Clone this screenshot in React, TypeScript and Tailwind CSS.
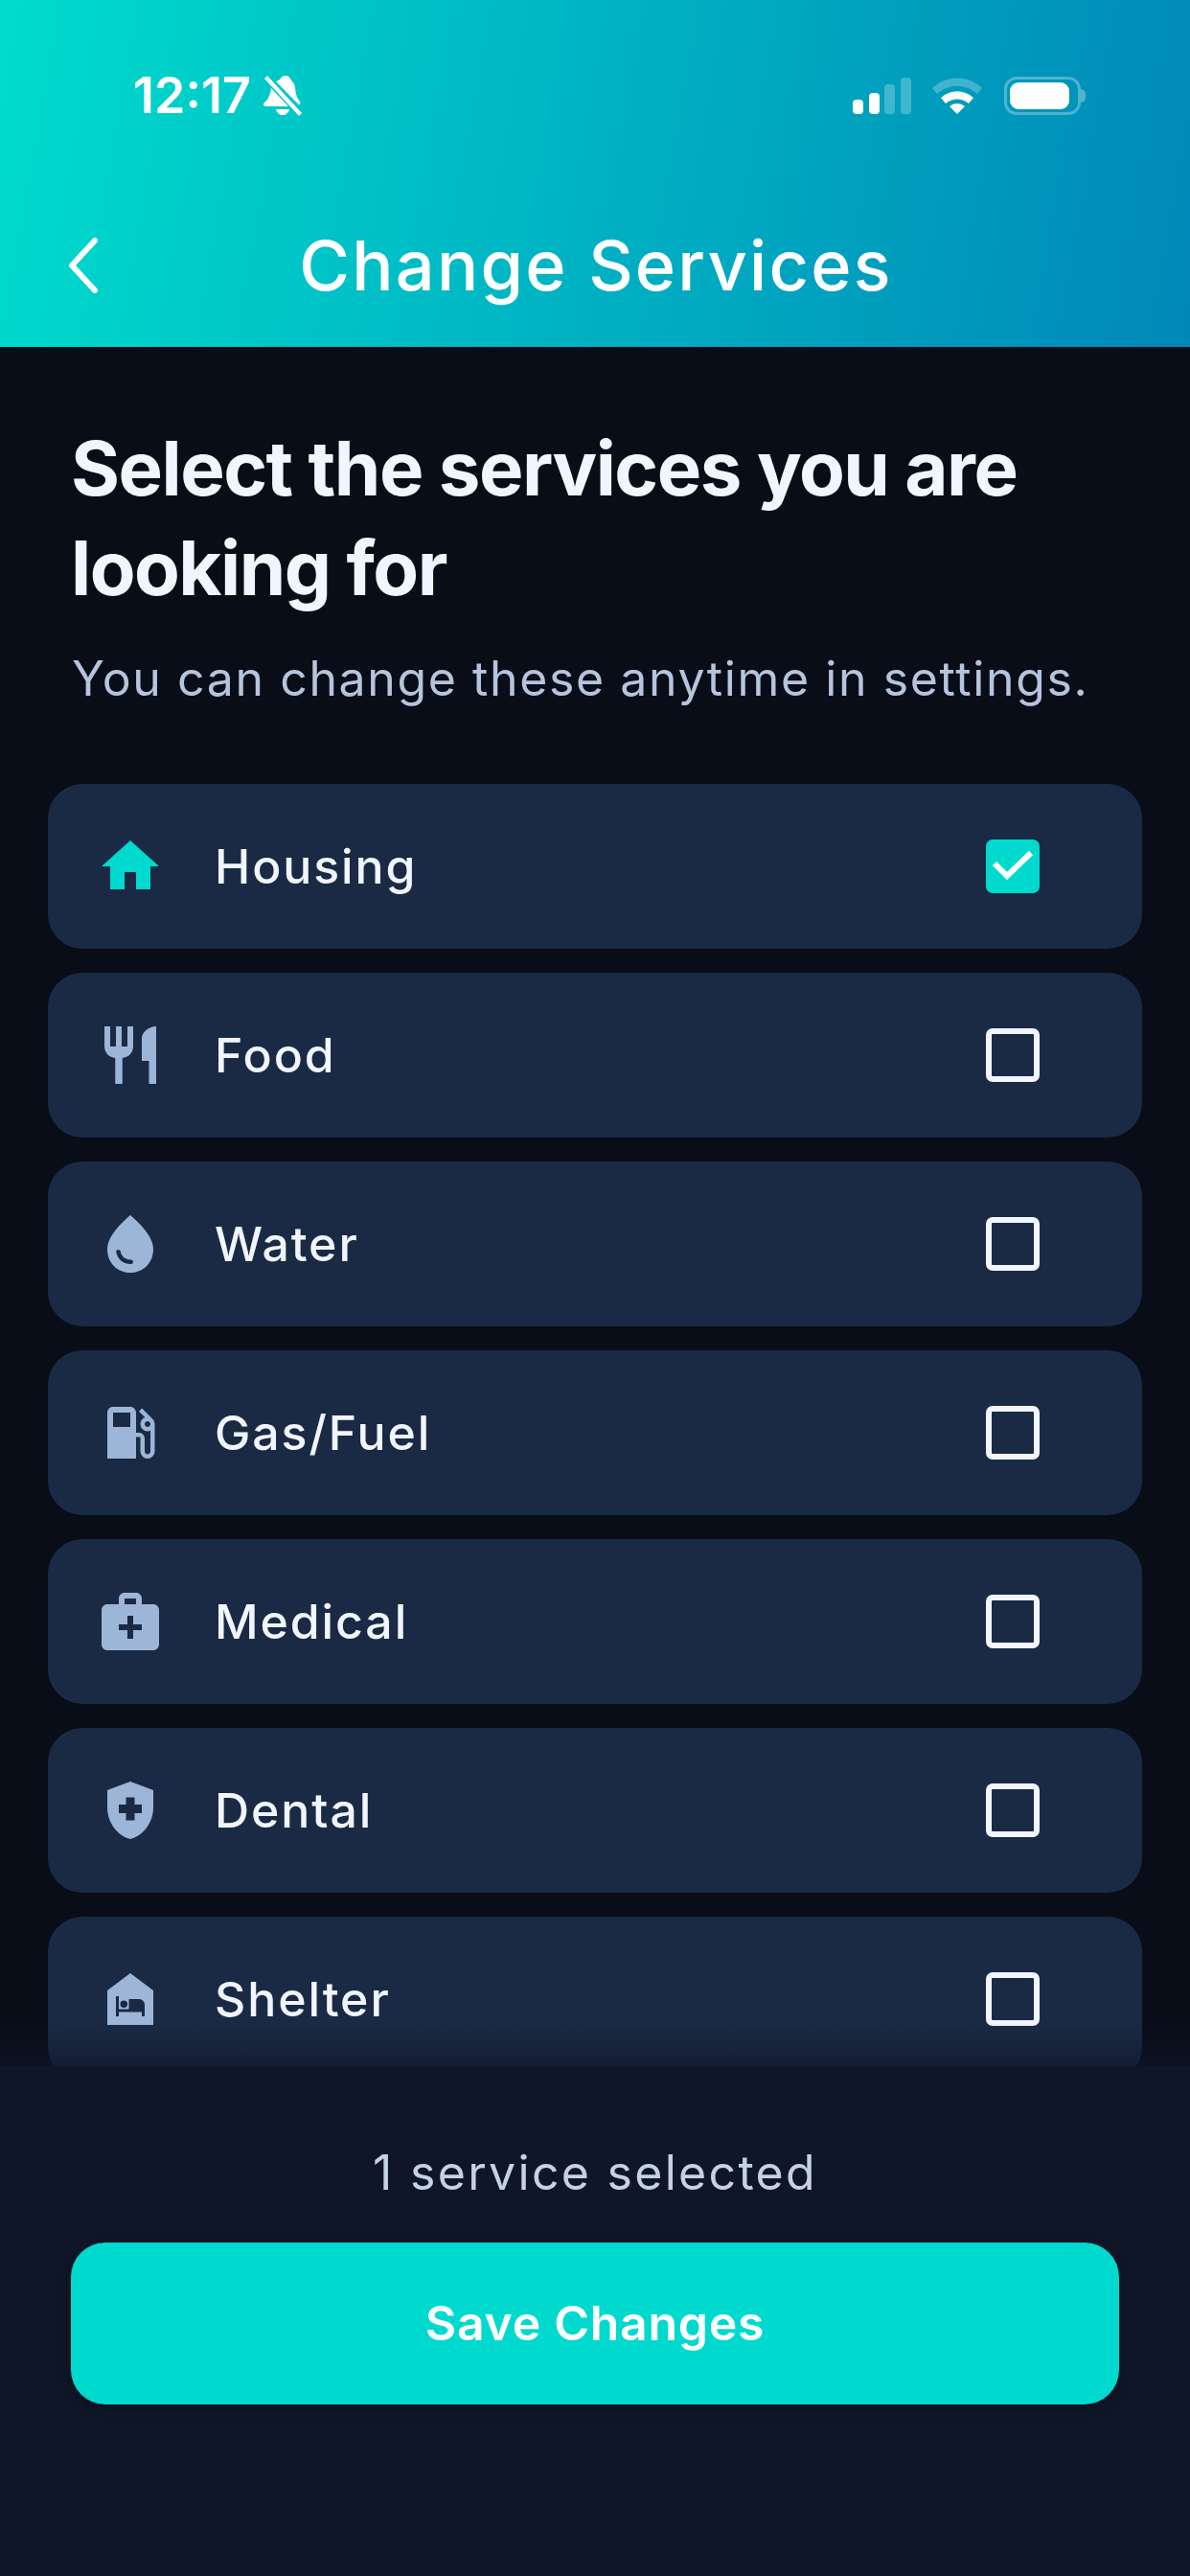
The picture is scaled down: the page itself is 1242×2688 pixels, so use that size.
import {
  MdHome,
  MdRestaurant,
  MdWaterDrop,
  MdLocalGasStation,
  MdMedicalServices,
  MdHealthAndSafety,
  MdNightShelter,
} from 'react-icons/md'
import type { IconType } from 'react-icons'

interface Service {
  label: string
  icon: IconType
  checked?: boolean
}

const services: Service[] = [
  { label: 'Housing', icon: MdHome, checked: true },
  { label: 'Food', icon: MdRestaurant },
  { label: 'Water', icon: MdWaterDrop },
  { label: 'Gas/Fuel', icon: MdLocalGasStation },
  { label: 'Medical', icon: MdMedicalServices },
  { label: 'Dental', icon: MdHealthAndSafety },
  { label: 'Shelter', icon: MdNightShelter },
]

function BellSlash() {
  return (
    <svg viewBox="0 0 42 44" className="w-[42px] h-[44px] ml-[12px]" fill="white">
      <path d="M24 1c3 0 5 2 6 5 4 3 4 7 4.500 11 .5 5 2 8 4.500 11 1 2 0 3-1 3.500L14 7c2-1 3-1 4-2 1-2 3-4 6-4z" />
      <path d="M9 14l18 19H4c-3 0-4-2-2-4 4-3 6-8 7-15z" />
      <path d="M14 36h14c-1 4-4 6-7 6s-6-2-7-6z" />
      <path d="M2 4l3-3 36 39-3 3z" />
    </svg>
  )
}

function StatusIcons() {
  return (
    <div className="flex items-center">
      <svg viewBox="0 0 61 38" className="w-[61px] h-[38px]" fill="white">
        <rect x="0" y="23" width="11" height="15" rx="4" />
        <rect x="17" y="16" width="11" height="22" rx="4" />
        <rect x="33" y="7" width="11" height="31" rx="4" fillOpacity="0.25" />
        <rect x="50" y="0" width="11" height="38" rx="4" fillOpacity="0.25" />
      </svg>
      <svg viewBox="0 0 52 38" className="w-[52px] h-[38px] ml-[22px]" fill="white">
        <path d="M0 11C14-3 38-3 52 11l-5 6C35 6 17 6 5 17z" fillOpacity="0.25" />
        <path d="M9 21c10-9 24-9 34 0l-5 6c-7-6-17-6-24 0z" />
        <path d="M18 30c5-4 11-4 16 0l-8 8z" />
      </svg>
      <div className="flex items-center ml-[23px]">
        <div className="w-[80px] h-[40px] rounded-[13px] border-[3px] border-white/30 p-[3px]">
          <div className="w-[62px] h-full rounded-[9px] bg-white" />
        </div>
        <div className="w-[5px] h-[14px] rounded-r-full bg-white/30" />
      </div>
    </div>
  )
}

function Checkbox({ checked }: { checked?: boolean }) {
  if (checked) {
    return (
      <div className="w-[56px] h-[56px] rounded-[7px] bg-[#00d9cd]">
        <svg viewBox="0 0 56 56" className="w-[56px] h-[56px]" fill="none">
          <path d="M9 25l13 13L47 14" stroke="white" strokeWidth="6" />
        </svg>
      </div>
    )
  }
  return <div className="w-[56px] h-[56px] rounded-[7px] border-[6px] border-[#f1f5ff]" />
}

function ServiceRow({ service }: { service: Service }) {
  const Icon = service.icon
  return (
    <div className="h-[172px] shrink-0 rounded-[36px] bg-[#1a2a45] pl-[50px] pr-[107px] flex items-center">
      <Icon className={`w-[72px] h-[72px] ${service.checked ? 'text-[#00d9cd]' : 'text-[#9db5d6]'}`} />
      <span className="ml-[52px] flex-1 text-[50px] leading-[60px] font-medium tracking-[1.9px] text-[#f1f5ff]">
        {service.label}
      </span>
      <Checkbox checked={service.checked} />
    </div>
  )
}

export default function App() {
  return (
    <div className="w-[1242px] h-[2688px] flex flex-col overflow-hidden bg-[#080d18] [font-family:Inter,sans-serif]">
      <header className="h-[362px] shrink-0 bg-[linear-gradient(100deg,#00dccd,#0088b8)] text-white">
        <div className="flex items-center justify-between h-[60px] mt-[70px] pl-[139px] pr-[109px]">
          <div className="flex items-center">
            <span className="text-[52px] leading-[60px] font-semibold">12:17</span>
            <BellSlash />
          </div>
          <StatusIcons />
        </div>
        <div className="grid grid-cols-[1fr_auto_1fr] items-center h-[100px] mt-[97px] pl-[70px]">
          <svg viewBox="0 0 33 58" className="w-[33px] h-[58px]" fill="none">
            <path d="M29 3L5 29l24 26" stroke="white" strokeWidth="6" strokeLinecap="round" strokeLinejoin="round" />
          </svg>
          <h1 className="-ml-[68px] text-center text-[72px] leading-[88px] font-medium tracking-[2.2px]">
            Change Services
          </h1>
          <div />
        </div>
      </header>

      <main className="flex-1 min-h-0 relative overflow-hidden">
        <div className="px-[74px] pt-[75px]">
          <h2 className="text-[78px] leading-[104px] font-bold tracking-[-1.5px] text-[#f1f5ff]">
            Select the services you are looking for
          </h2>
          <p className="mt-[27px] ml-[1px] text-[50px] leading-[72px] tracking-[1.6px] text-[#b6c4dc]">
            You can change these anytime in settings.
          </p>
        </div>
        <div className="mt-[74px] mx-[50px] flex flex-col gap-[25px]">
          {services.map((s) => (
            <ServiceRow key={s.label} service={s} />
          ))}
        </div>
        <div className="absolute left-0 right-0 bottom-0 h-[45px] bg-gradient-to-b from-transparent to-[#0f1628]/60" />
      </main>

      <footer className="h-[532px] shrink-0 bg-[#0f1628] px-[74px] pt-[81px]">
        <p className="text-center text-[50px] leading-[60px] tracking-[2.3px] text-[#c5d1e6]">1 service selected</p>
        <button className="mt-[43px] w-full h-[169px] rounded-[36px] bg-[#00d9cd] text-white text-[50px] font-semibold tracking-[0.7px] shadow-[0_4px_12px_rgba(0,0,0,0.25)]">
          Save Changes
        </button>
      </footer>
    </div>
  )
}
